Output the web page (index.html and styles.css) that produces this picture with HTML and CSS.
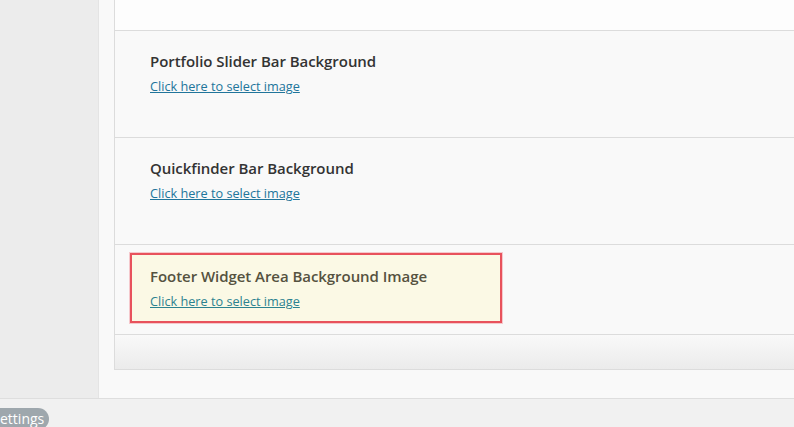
FILE: index.html
```html
<!DOCTYPE html>
<html>
<head>
<meta charset="utf-8">
<link rel="stylesheet" href="styles.css">
</head>
<body>
<div class="page">
  <div class="main">
    <aside class="sidebar"></aside>
    <div class="content">
      <div class="panel">
        <div class="panel-top"></div>
        <div class="row">
          <h3 class="title">Portfolio Slider Bar Background</h3>
          <a class="link" href="#">Click here to select image</a>
        </div>
        <div class="row">
          <h3 class="title">Quickfinder Bar Background</h3>
          <a class="link" href="#">Click here to select image</a>
        </div>
        <div class="row row-last">
          <div class="highlight">
            <h3 class="title">Footer Widget Area Background Image</h3>
            <a class="link" href="#">Click here to select image</a>
          </div>
        </div>
        <div class="panel-footer"></div>
      </div>
    </div>
  </div>
  <div class="bottom">
    <span class="pill">ettings</span>
  </div>
</div>
</body>
</html>
```

FILE: styles.css
```css
html, body {
  margin: 0;
  padding: 0;
  overflow: hidden;
}
body {
  background: #f1f1f1;
  font-family: "Open Sans", "Noto Sans", sans-serif;
  width: 794px;
  height: 427px;
}
.page {
  display: flex;
  flex-direction: column;
}
.main {
  display: flex;
  height: 398px;
  border-bottom: 1px solid #dedede;
}
.sidebar {
  width: 98px;
  background: #ececec;
  border-right: 1px solid #e4e4e4;
  flex: none;
}
.content {
  flex: 1;
  background: #f9f9f9;
  padding-left: 15px;
  padding-bottom: 28px;
  min-width: 0;
}
.panel {
  border-left: 1px solid #dcdcdc;
  border-bottom: 1px solid #dcdcdc;
  background: #f9f9f9;
  margin-right: -20px;
  display: flex;
  flex-direction: column;
}
.panel-top {
  height: 30px;
  background: #fdfdfd;
  border-bottom: 1px solid #dcdcdc;
}
.row {
  height: 106px;
  box-sizing: content-box;
  border-bottom: 1px solid #dcdcdc;
  padding: 0 0 0 35px;
  display: flex;
  flex-direction: column;
  align-items: flex-start;
}
.row .title {
  margin-top: 20px;
}
.title {
  margin: 0;
  font-size: 15px;
  font-weight: 600;
  line-height: 20px;
  color: #333;
  letter-spacing: -0.05px;
}
.link {
  margin-top: 6px;
  font-size: 12.7px;
  line-height: 18px;
  color: #21759b;
  text-decoration: underline;
}
.row-last {
  padding: 8px 0 0 15px;
  box-sizing: border-box;
  height: 90px;
}
.row-last .title {
  margin-top: 0;
}
.highlight {
  width: 350px;
  height: 55px;
  background: #fbf9e5;
  border: 2px solid #e8525c;
  box-shadow: 0 0 0 1px rgba(240, 140, 148, 0.45);
  padding: 11px 0 0 18px;
  box-sizing: content-box;
  display: flex;
  flex-direction: column;
  align-items: flex-start;
}
.highlight .title {
  color: #55523f;
}
.highlight .link {
  color: #2b8290;
}
.panel-footer {
  height: 34px;
  background: linear-gradient(#f9f9f9, #ebebeb);
}
.bottom {
  padding-top: 9px;
  display: flex;
}
.pill {
  display: inline-block;
  background: #9ea7ad;
  color: #fff;
  font-size: 14px;
  line-height: 22px;
  padding: 0 5px 0 0;
  border-radius: 0 11px 11px 0;
}
```
